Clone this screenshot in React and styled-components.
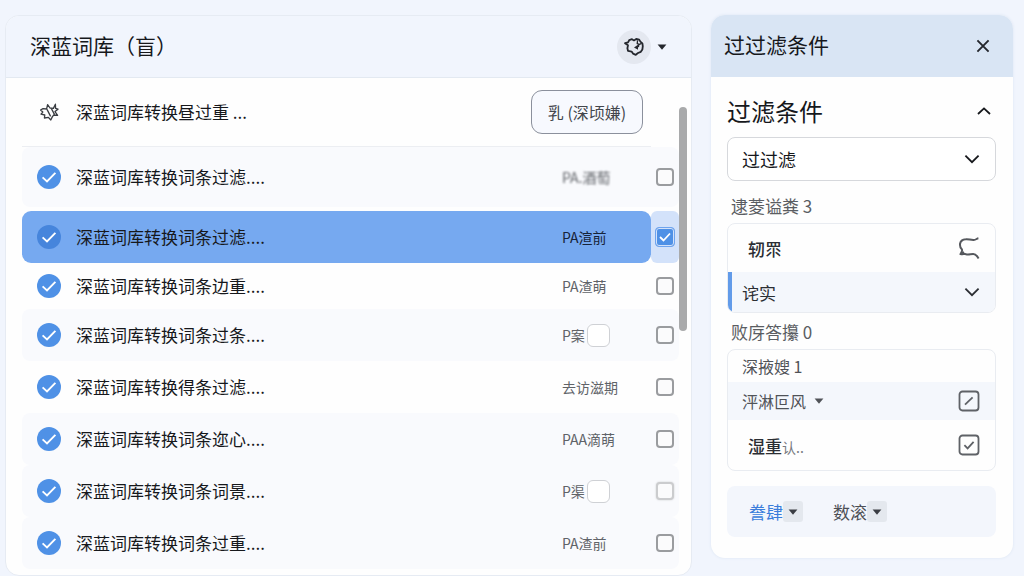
import React, { useState } from 'react';
import styled, { createGlobalStyle } from 'styled-components';

const ENTRIES = [
    { id: 1, title: '深蓝词库转换词条过滤....', status: 'PA.酒萄', height: 60, tinted: true, faded: true },
    { id: 2, title: '深蓝词库转换词条过滤....', status: 'PA渲前', height: 52, active: true },
    { id: 3, title: '深蓝词库转换词条边重....', status: 'PA渣萌', height: 46 },
    { id: 4, title: '深蓝词库转换词条过条....', status: 'P案', height: 52, tinted: true, slot: true },
    { id: 5, title: '深蓝词库转换得条过滤....', status: '去访滋期', height: 52 },
    { id: 6, title: '深蓝词库转换词条迩心....', status: 'PAA滴萌', height: 52, tinted: true },
    { id: 7, title: '深蓝词库转换词条词景....', status: 'P渠', height: 52, tinted: true, slot: true, soft: true },
    { id: 8, title: '深蓝词库转换词条过重....', status: 'PA渣前', height: 52, tinted: true },
];

const Check = () => (
    <svg width="24" height="24" viewBox="0 0 24 24" aria-hidden="true">
        <path d="M5.6 12.4 10 16.4 18.4 7.8" fill="none" stroke="#fff" strokeWidth="1.9" />
    </svg>
);

const Caret = () => (
    <svg width="10" height="6" viewBox="0 0 10 6" aria-hidden="true">
        <path d="M.6.4h8.8L5 5.8z" fill="currentColor" />
    </svg>
);

const Chevron = ({ up }) => (
    <svg width="16" height="10" viewBox="0 0 16 10" aria-hidden="true">
        <path d={up ? 'M2 8 8 2.4 14 8' : 'M1.4 1.6 8 8.2 14.6 1.6'} fill="none" stroke="currentColor" strokeWidth="1.8" />
    </svg>
);

function Entry({ entry, checked, onToggle }) {
    return (
        <Row $first={entry.id === 1}>
            <RowMain $height={entry.height} $tinted={entry.tinted} $active={entry.active}>
                <Badge $active={entry.active}><Check /></Badge>
                <RowTitle htmlFor={`entry-${entry.id}`}>{entry.title}</RowTitle>
                <Status $active={entry.active} $faded={entry.faded}>
                    {entry.status}
                    {entry.slot && <Slot />}
                </Status>
            </RowMain>
            <CheckCell $tinted={entry.tinted} $active={entry.active}>
                <Checkbox
                    id={`entry-${entry.id}`}
                    type="checkbox"
                    checked={checked}
                    onChange={onToggle}
                    $soft={entry.soft}
                />
            </CheckCell>
        </Row>
    );
}

function App() {
    const [selected, setSelected] = useState([2]);
    const [open, setOpen] = useState(true);

    // Handle row selection
    const toggle = (id) => {
        setSelected((prev) => (prev.includes(id) ? prev.filter((x) => x !== id) : [...prev, id]));
    };

    return (
        <>
            <GlobalStyle />
            <Page>
                <Library>
                    <LibraryHeader>
                        <Title>深蓝词库（盲）</Title>
                        <RoundButton type="button" aria-label="设置">
                            <svg width="22" height="22" viewBox="0 0 22 22" fill="none" stroke="#24272d" strokeWidth="1.8" strokeLinejoin="round" aria-hidden="true">
                                <path d="M2 7.200 5 6.400 6.200 4.200 9 3.200 11 4.400 13.200 3 16.200 3.600 17.400 5.600 19.400 7.400 19.800 10.200 19.400 13.400 17.800 15.800 15 17 12.800 18.800 10 17.600 8.600 15.600 5 14.800 4.400 12.200 5 9.200z" />
                                <path d="M14.600 4.400 14.200 7.600 16.400 8.400 18.600 7.400M15.800 8.600 15.400 11.200" strokeWidth="1.3" />
                                <path d="m11 11.400 4-2.600v5z" fill="#24272d" stroke="none" />
                            </svg>
                        </RoundButton>
                        <IconButton type="button" aria-label="更多"><Caret /></IconButton>
                    </LibraryHeader>
                    <LibraryBody>
                        <Content>
                            <Toolbar>
                                <IconSlot>
                                    <svg width="20" height="20" viewBox="0 0 20 20" fill="none" stroke="#3a3d42" strokeWidth="1.3" strokeLinejoin="round" aria-hidden="true">
                                        <path d="M1.600 8 4 6.600 7.600 7 8.600 2.600 11 6 14.400 6.400 16.400 2.200 16.600 6.400 19 7.200 16 9.600 18.600 13.400 14.800 13 13.400 14.600 11.800 18 9.400 15.400 5.400 16 5.800 13 2 12.200 3.800 10z" />
                                        <path d="M8 7.400 11.600 14.400M12.400 6.600 15.600 12.600" />
                                    </svg>
                                </IconSlot>
                                <ToolbarTitle>深蓝词库转换昼过重 ...</ToolbarTitle>
                                <OutlineButton type="button">乳 (深顷嫌)</OutlineButton>
                            </Toolbar>
                            {ENTRIES.map((entry) => (
                                <Entry
                                    key={entry.id}
                                    entry={entry}
                                    checked={selected.includes(entry.id)}
                                    onToggle={() => toggle(entry.id)}
                                />
                            ))}
                        </Content>
                        <ScrollTrack><ScrollThumb /></ScrollTrack>
                    </LibraryBody>
                </Library>

                <Filters>
                    <FiltersHeader>
                        <Title>过过滤条件</Title>
                        <IconButton type="button" aria-label="关闭">
                            <svg width="14" height="14" viewBox="0 0 14 14" aria-hidden="true">
                                <path d="M1.400 1.400 12.600 12.600M12.600 1.400 1.400 12.600" stroke="currentColor" strokeWidth="1.9" />
                            </svg>
                        </IconButton>
                    </FiltersHeader>
                    <FiltersBody>
                        <SectionToggle type="button" onClick={() => setOpen(!open)} aria-expanded={open}>
                            过滤条件
                            <Chevron up={open} />
                        </SectionToggle>
                        <SelectBox>
                            <select aria-label="过滤方式" defaultValue="filter">
                                <option value="filter">过过滤</option>
                            </select>
                            <Chevron />
                        </SelectBox>

                        <GroupLabel $spaced>逮菱谥粪 3</GroupLabel>
                        <Group>
                            <Option $height={48} $inset>
                                <strong>轫眔</strong>
                                <svg width="22" height="24" viewBox="0 0 22 24" fill="none" stroke="#55585d" strokeWidth="2" aria-hidden="true">
                                    <path d="M20.400 2.200c-1.600.2-2.400 1.800-4.600 1.800-3.400.2-5-1.200-8-.8C4.800 3.400 2.400 5.200 2 8c-.2 2.400.2 4 2 5.600.6 1.200-.6 2.600-1.400 4.400 2.400.8 3.600-.6 5.600.2 2 .6 4.400-.2 7-.2 2.400 0 3.600 1.400 5.400 4.400" />
                                    <path d="m2.600 18 3.400-2" />
                                </svg>
                            </Option>
                            <Option $height={40} $tinted $marked>
                                <span>诧实</span>
                                <Chevron />
                            </Option>
                        </Group>

                        <GroupLabel>败庌答攥 0</GroupLabel>
                        <Group>
                            <Option $height={32} $small>
                                <span>深掖嫂 1</span>
                            </Option>
                            <Option $height={38} $small $tinted>
                                <span>泙淋叵风 <Caret /></span>
                                <svg width="22" height="22" viewBox="0 0 22 22" fill="none" stroke="#5f6267" strokeWidth="1.800" aria-hidden="true">
                                    <rect x="1.500" y="1.500" width="19" height="19" rx="3" />
                                    <path d="m7 14.600 7.600-7.200" />
                                </svg>
                            </Option>
                            <Option $height={50} $inset>
                                <strong>湿重<small>认..</small></strong>
                                <svg width="22" height="22" viewBox="0 0 22 22" fill="none" stroke="#5f6267" strokeWidth="1.800" aria-hidden="true">
                                    <rect x="1.500" y="1.500" width="19" height="19" rx="3" />
                                    <path d="m6.400 11.200 3.200 3.200 6-6.600" />
                                </svg>
                            </Option>
                        </Group>

                        <Actions>
                            <ActionButton type="button" $primary>
                                誊肆<em><Caret /></em>
                            </ActionButton>
                            <ActionButton type="button">
                                数滚<em><Caret /></em>
                            </ActionButton>
                        </Actions>
                    </FiltersBody>
                </Filters>
            </Page>
        </>
    );
}

const GlobalStyle = createGlobalStyle`
    * {
        box-sizing: border-box;
    }

    body {
        margin: 0;
        background-color: #f1f5fd;
        color: #16181c;
        font-family: 'Noto Sans CJK SC', 'Noto Sans', sans-serif;
    }

    button, select, input {
        font: inherit;
        color: inherit;
        margin: 0;
    }

    button {
        padding: 0;
        border: 0;
        background: none;
        cursor: pointer;
    }

    svg {
        flex: none;
        display: block;
    }
`;

const Page = styled.div`
    display: flex;
    align-items: flex-start;
    gap: 19px;
    padding: 15px 11px 0 5px;
`;

const Library = styled.main`
    flex: 1;
    min-width: 0;
    overflow: hidden;
    background-color: #fefefe;
    border: 1px solid #e6ebf3;
    border-radius: 14px;
`;

const LibraryHeader = styled.header`
    display: flex;
    align-items: center;
    gap: 4px;
    height: 62px;
    padding: 0 22px 0 24px;
    background-color: #f1f5fd;
    border-bottom: 1px solid #e3e9f1;
`;

const Title = styled.h1`
    flex: 1;
    margin: 0;
    padding-bottom: 4px;
    font-size: 21px;
    line-height: 32px;
    font-weight: 400;
`;

const RoundButton = styled.button`
    display: grid;
    place-items: center;
    width: 34px;
    height: 34px;
    border-radius: 50%;
    background-color: #e4e8f0;
`;

const IconButton = styled.button`
    display: grid;
    place-items: center;
    width: 14px;
    height: 24px;
    color: #24272d;
`;

const LibraryBody = styled.div`
    display: flex;
    padding: 0 4px 6px 16px;
`;

const Content = styled.div`
    flex: 1;
    min-width: 0;
`;

const Toolbar = styled.div`
    display: flex;
    align-items: center;
    height: 69px;
    margin-right: 28px;
    padding: 0 8px 0 14px;
    border-bottom: 1px solid #eceef2;
`;

const IconSlot = styled.div`
    display: grid;
    place-items: center;
    width: 26px;
    margin-right: 14px;
`;

const ToolbarTitle = styled.h2`
    flex: 1;
    margin: 0;
    font-size: 17px;
    line-height: 24px;
    font-weight: 400;
`;

const OutlineButton = styled.button`
    width: 112px;
    height: 44px;
    border: 1px solid #8b909c;
    border-radius: 11px;
    background-color: #f7f9fe;
    color: #43464c;
    font-size: 16px;
    white-space: nowrap;
`;

const Row = styled.div`
    display: flex;
    margin-bottom: ${({ $first }) => ($first ? '4px' : '0')};
`;

const RowMain = styled.div`
    flex: 1;
    display: flex;
    align-items: center;
    height: ${({ $height }) => $height}px;
    padding-left: 15px;
    border-radius: ${({ $active }) => ($active ? '9px' : '8px 0 0 8px')};
    background-color: ${({ $active, $tinted }) => ($active ? '#76a9f0' : $tinted ? '#f9fafd' : 'transparent')};
`;

const Badge = styled.span`
    display: block;
    margin-right: 15px;
    border-radius: 50%;
    background-color: ${({ $active }) => ($active ? '#4685dc' : '#4f91e6')};
`;

const RowTitle = styled.label`
    flex: 1;
    font-size: 17px;
    line-height: 24px;
    white-space: nowrap;
`;

const Status = styled.span`
    display: flex;
    align-items: center;
    gap: 2px;
    width: 89px;
    font-size: 14px;
    line-height: 20px;
    white-space: nowrap;
    color: ${({ $active }) => ($active ? '#172338' : '#606368')};
    filter: ${({ $faded }) => ($faded ? 'blur(1px)' : 'none')};
`;

const Slot = styled.span`
    width: 23px;
    height: 23px;
    border: 1px solid #cfd1d5;
    border-radius: 6px;
    background-color: #fff;
`;

const CheckCell = styled.div`
    display: grid;
    place-items: center;
    width: 28px;
    border-radius: ${({ $active }) => ($active ? '6px' : '0 8px 8px 0')};
    background-color: ${({ $active, $tinted }) => ($active ? '#d3e2fa' : $tinted ? '#f9fafd' : 'transparent')};
`;

const Checkbox = styled.input`
    appearance: none;
    width: 18px;
    height: 18px;
    border: 2px solid ${({ $soft }) => ($soft ? '#cbccce' : '#9a9c9f')};
    border-radius: 4px;
    background-color: #fbfbfc;
    box-shadow: ${({ $soft }) => ($soft ? '0 0 2px #cbccce' : 'none')};

    &:checked {
        width: 20px;
        height: 20px;
        border: 1px solid #6ea4ee;
        background: #4f91e6 url("data:image/svg+xml,%3Csvg xmlns='http://www.w3.org/2000/svg' viewBox='0 0 16 16'%3E%3Cpath d='M3 8l3.500 3.500L13 4.500' fill='none' stroke='white' stroke-width='1.800'/%3E%3C/svg%3E") center / 16px no-repeat;
        box-shadow: inset 0 0 0 1px #d3e2fa;
    }
`;

const ScrollTrack = styled.div`
    width: 8px;
    padding-top: 29px;
`;

const ScrollThumb = styled.div`
    height: 224px;
    border-radius: 4px;
    background-color: #a9aaab;
`;

const Filters = styled.aside`
    width: 302px;
    overflow: hidden;
    background-color: #fefefe;
    border-radius: 14px;
    box-shadow: 0 0 3px #dbe4f2;
`;

const FiltersHeader = styled.header`
    display: flex;
    align-items: center;
    height: 62px;
    padding: 0 23px 0 13px;
    background-color: #d9e5f4;
`;

const FiltersBody = styled.div`
    padding: 16px 17px 21px 16px;
`;

const SectionToggle = styled.button`
    display: flex;
    align-items: center;
    justify-content: space-between;
    width: 100%;
    height: 36px;
    margin-bottom: 8px;
    padding-right: 4px;
    font-size: 24px;
    line-height: 36px;
`;

const SelectBox = styled.div`
    display: grid;
    align-items: center;
    height: 44px;

    select, svg {
        grid-area: 1 / 1;
    }

    select {
        appearance: none;
        width: 100%;
        height: 44px;
        padding: 0 14px;
        border: 1px solid #d6d8dc;
        border-radius: 8px;
        background-color: #fff;
        font-size: 18px;
    }

    svg {
        justify-self: end;
        margin-right: 16px;
        pointer-events: none;
    }
`;

const GroupLabel = styled.h3`
    margin: 0;
    padding: ${({ $spaced }) => ($spaced ? '13px 4px 5px' : '7px 4px 5px')};
    font-size: 17px;
    line-height: 24px;
    font-weight: 400;
    color: #5a5d62;
`;

const Group = styled.div`
    overflow: hidden;
    border: 1px solid #e9ecf1;
    border-radius: 8px;
`;

const Option = styled.div`
    display: flex;
    align-items: center;
    justify-content: space-between;
    height: ${({ $height }) => $height}px;
    padding-right: 15px;
    padding-left: ${({ $inset, $marked }) => ($inset ? '20px' : $marked ? '10px' : '14px')};
    border-left: ${({ $marked }) => ($marked ? '4px solid #629be9' : '0')};
    background-color: ${({ $tinted }) => ($tinted ? '#f4f7fc' : 'transparent')};
    font-size: ${({ $small }) => ($small ? '16px' : '17px')};
    color: ${({ $small }) => ($small ? '#505358' : '#2b2e33')};

    span {
        display: flex;
        align-items: center;
        gap: 8px;
    }

    strong {
        font-weight: 500;
    }

    small {
        font-size: 14px;
        font-weight: 400;
        color: #777a80;
    }
`;

const Actions = styled.div`
    display: flex;
    align-items: center;
    gap: 30px;
    margin-top: 15px;
    padding: 0 22px;
    height: 51px;
    border-radius: 8px;
    background-color: #f3f6fc;
`;

const ActionButton = styled.button`
    display: flex;
    align-items: center;
    font-size: 17px;
    line-height: 22px;
    color: ${({ $primary }) => ($primary ? '#3a7ddb' : '#4c4f55')};

    em {
        display: grid;
        place-items: center;
        width: 20px;
        height: 21px;
        border-radius: 3px;
        background-color: #e4e8ee;
        color: #3a3d43;
    }
`;

export default App;
